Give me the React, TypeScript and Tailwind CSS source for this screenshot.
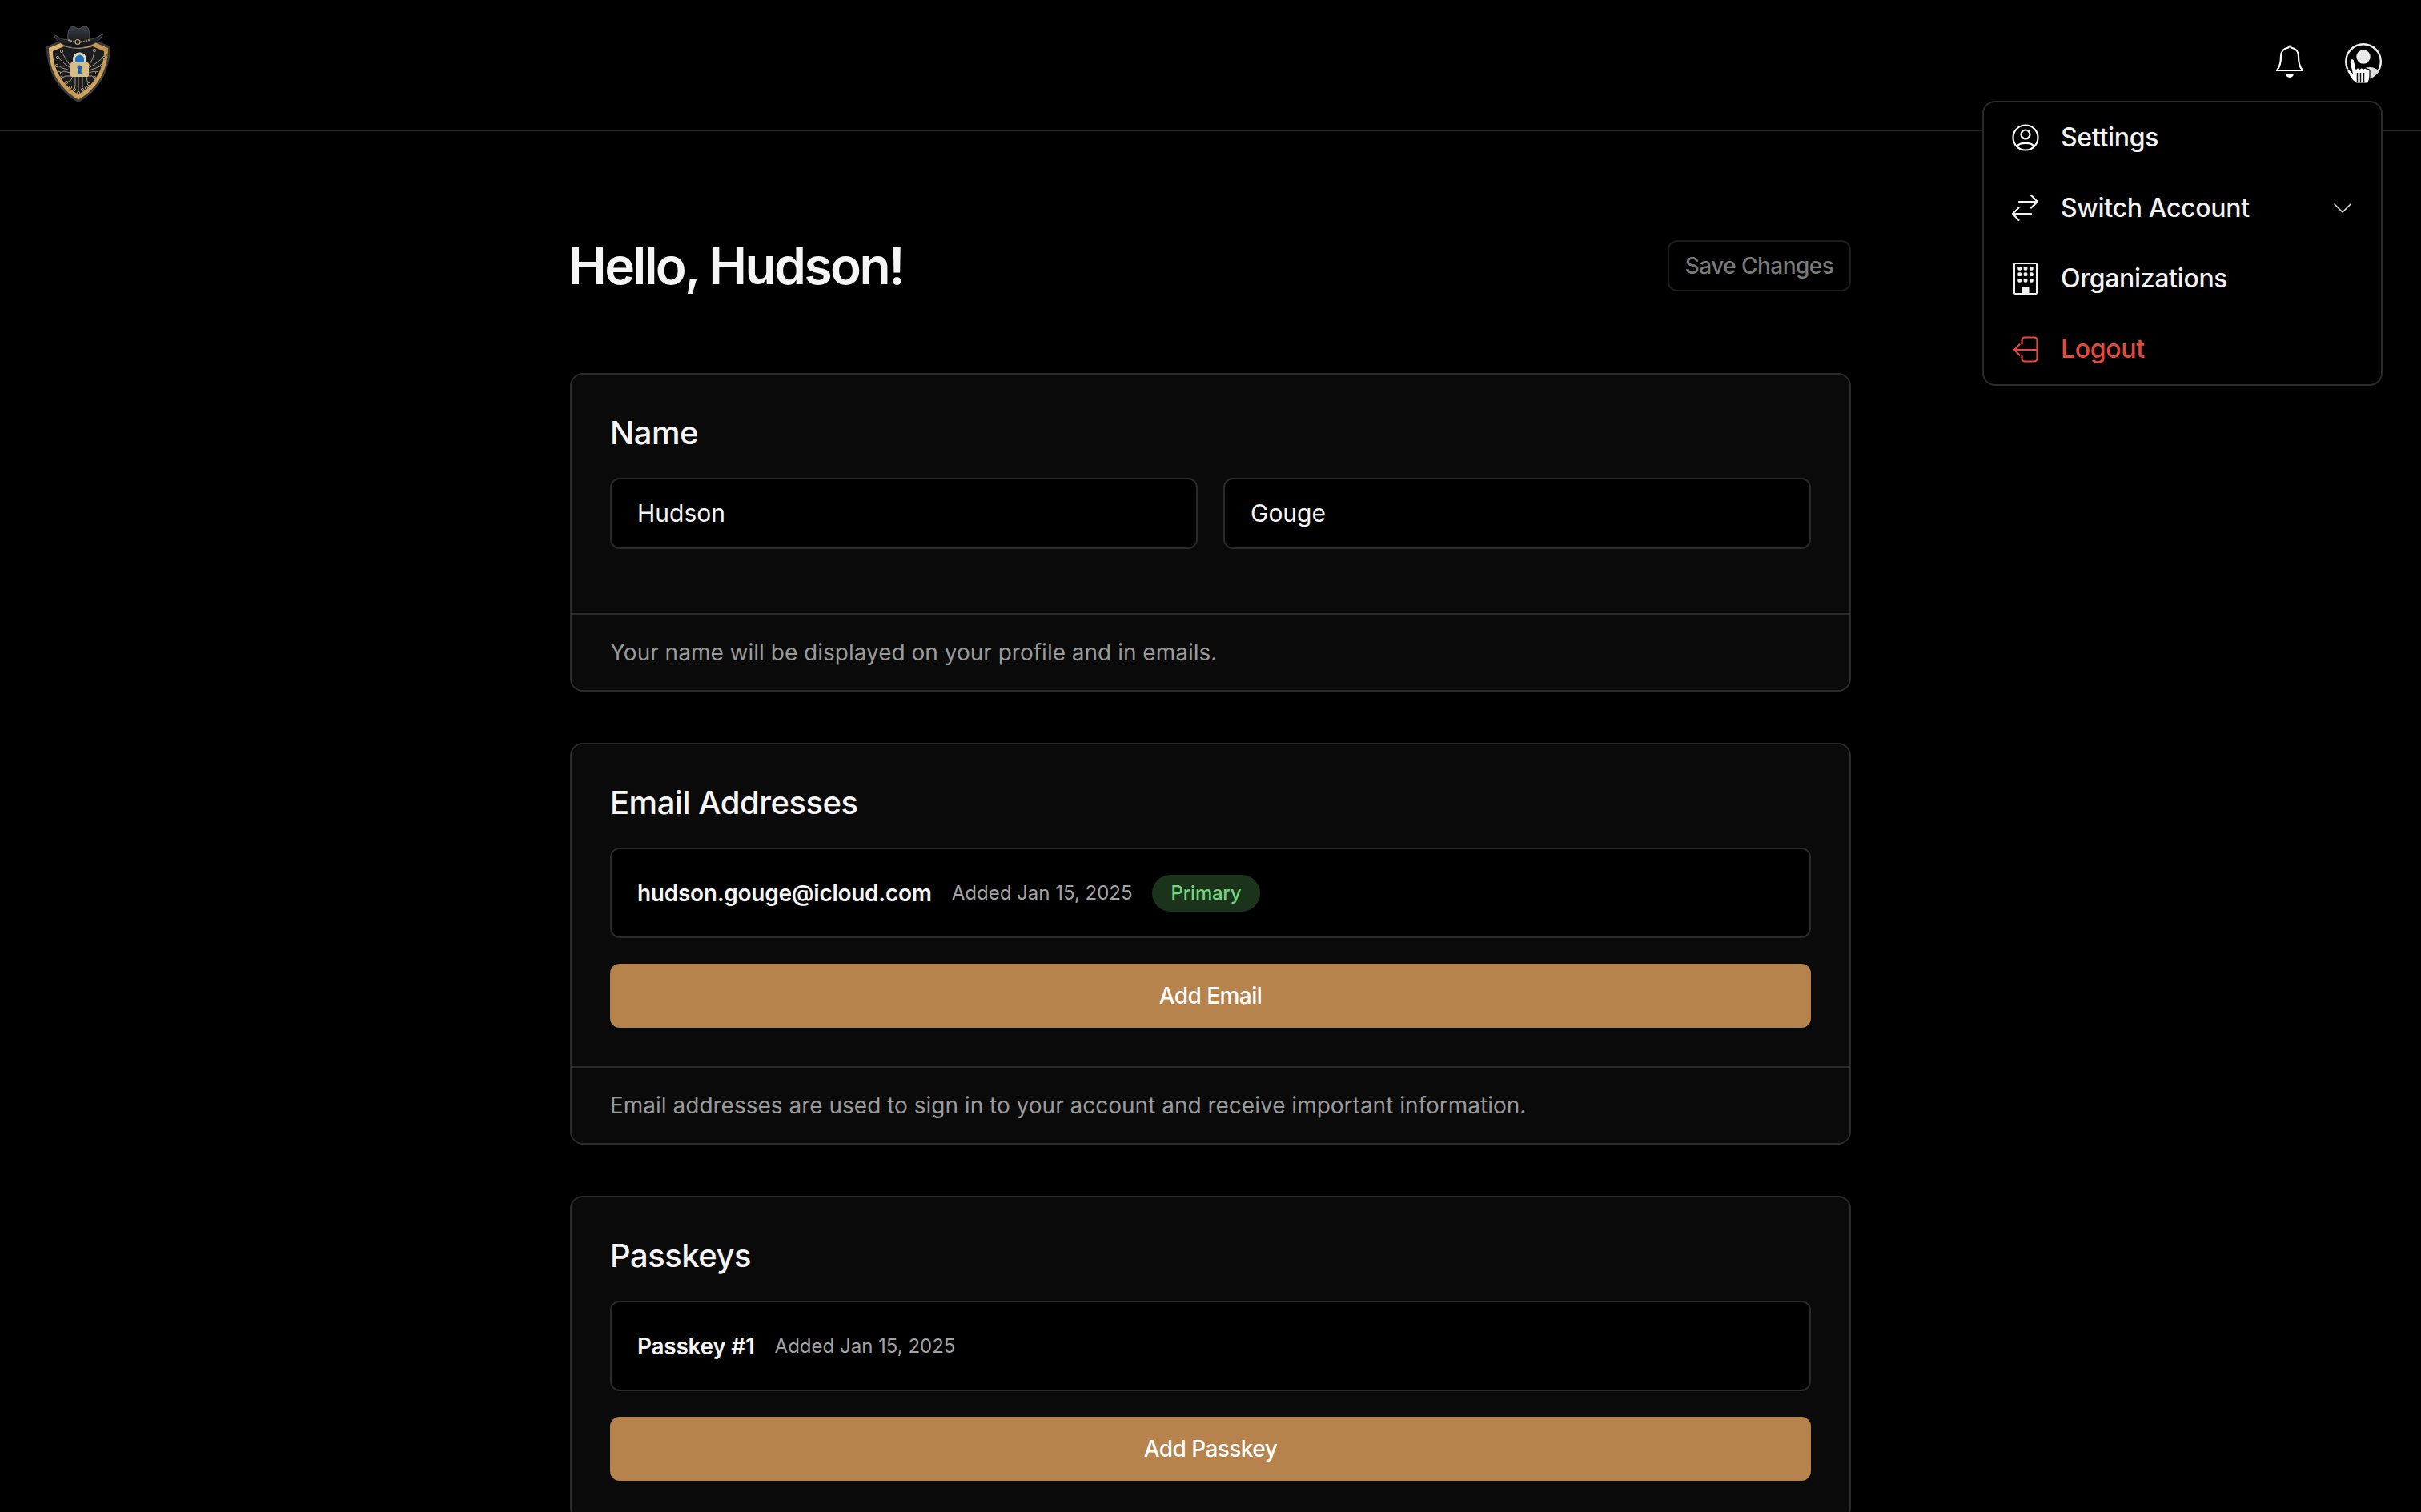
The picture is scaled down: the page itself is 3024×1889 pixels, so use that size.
function Logo() {
  const traces = [
    "M38 57 L33 50 L27 40", "M38 60 L30 54 L23 47", "M38 63 L28 60 L22 57", "M38 66 L30 64 L25 66", "M39 70 L32 70 L28 72",
    "M41 71 L38 76 L33 78", "M61 57 L66 48 L68 39", "M61 60 L70 54 L79 47", "M61 63 L70 60 L77 57", "M61 66 L68 64 L71 66", "M60 70 L65 70 L68 72",
    "M58 71 L59 76 L61 80", "M44 71 L44 82 L43 87", "M48 71 L48 91", "M53 71 L53 87",
  ];
  const pads = [
    [27, 39], [22, 47], [21, 57], [24, 66], [27, 72], [33, 78], [38, 84], [43, 87], [48, 91], [53, 87],
    [58, 85], [61, 80], [68, 72], [71, 66], [77, 57], [80, 47], [68, 38],
  ];
  const rivets = [[12, 44], [14, 60], [84, 44], [82, 60], [20, 74], [76, 74]];
  return (
    <svg viewBox="0 0 100 110" className="mb-0.5 h-[110px] w-[100px]">
      <defs>
        <linearGradient id="gold" x1="0" y1="0" x2="1" y2="1">
          <stop offset="0" stopColor="#e3bd74" />
          <stop offset="0.55" stopColor="#c2944f" />
          <stop offset="1" stopColor="#e0b568" />
        </linearGradient>
        <linearGradient id="hat" x1="0" y1="0" x2="0" y2="1">
          <stop offset="0" stopColor="#3a3d45" />
          <stop offset="1" stopColor="#101014" />
        </linearGradient>
      </defs>
      <path d="M8 33 L28 25 Q48 31 68 25 L88 33 C88 65 72 90 48 103 C24 90 8 65 8 33Z" fill="#3a3b40" />
      <path d="M11 35 L28 28 Q48 34 68 28 L85 35 C85 64 70 87 48 99.500 C26 87 11 64 11 35Z" fill="url(#gold)" />
      <path d="M16 39 L30 33 Q48 39 66 33 L80 39 C80 62 67 82 48 93 C29 82 16 62 16 39Z" fill="#1b1c20" />
      {rivets.map(([cx, cy]) => (
        <circle key={`${cx}-${cy}`} cx={cx} cy={cy} r="0.900" fill="#5a4a2c" />
      ))}
      {traces.map((d) => (
        <path key={d} d={d} fill="none" stroke="#a3957a" strokeWidth="1" />
      ))}
      {pads.map(([cx, cy]) => (
        <circle key={`${cx}-${cy}`} cx={cx} cy={cy} r="1.700" fill="#1b1c20" stroke="#b8a67c" strokeWidth="0.900" />
      ))}
      <path d="M42.500 54 V49 a7 7 0 0 1 14 0 V54" fill="#1d6fc0" stroke="#e8dcb8" strokeWidth="3" />
      <rect x="38" y="53" width="23" height="18" rx="2" fill="#d8bd84" />
      <path d="M49.500 56.500 a3 3 0 0 1 1.800 5.400 L52 68 H47 L47.700 61.900 A3 3 0 0 1 49.500 56.500Z" fill="#1b5fa8" />
      <path d="M17 18 C24 22 30 26 35 24 C34 16 36 9 40 8 C44 8 46 11 48 11 C51 11 54 7 58 8 C62 10 62 18 62 24 C68 24 74 20 79 17 C76 25 68 33 48 35 C30 35 20 27 17 18Z" fill="url(#hat)" stroke="#5a5d66" strokeWidth="0.800" />
      <path d="M35 25 Q48 30 62 25" fill="none" stroke="#a8946c" strokeWidth="2" strokeDasharray="2 1.200" />
      <circle cx="47" cy="27.500" r="3" fill="#201e1a" stroke="#bda578" strokeWidth="1.200" />
    </svg>
  );
}

function BellIcon() {
  return (
    <svg viewBox="13 11 34 42" fill="none" stroke="white" strokeWidth="2.200" strokeLinejoin="round" className="h-[42px] w-[34px]">
      <path d="M30 12.500 c1 0 1.500 1 1.500 2 c6 1 9.500 5 9.500 11 c0 7 1 13 5 17.500 H14 c4-4.500 5-10.500 5-17.500 c0-6 3.500-10 9.500-11 c0-1 .5-2 1.500-2Z" />
      <path d="M25 47 h10 a5 5 0 0 1-10 0Z" fill="white" stroke="none" />
    </svg>
  );
}

function AvatarIcon() {
  return (
    <svg viewBox="98 8 48 48" className="h-12 w-12 overflow-visible">
      <circle cx="122" cy="32" r="21.800" fill="black" stroke="#f0f0f0" strokeWidth="2.400" />
      <circle cx="122" cy="26" r="8.700" fill="#e8e8e8" />
      <path d="M124 40 C133 37 139 41 141.500 44 C137 49 130 53 124 53.500Z" fill="#dddddd" />
      <path
        d="M105.500 30 c1.500-2 4.500-1.500 5 .5 l2.500 11 c.5-2 4-2 4.500 0 c.5-2 4-2 4.500 0 c.5-2 4-2 4.500 .5 c1-1 3.500-.5 3.500 1.500 v7 c0 3-1 6-3 8.500 h-14 c-3-2-6-5-7.500-8 l-3.500-6.500 c-1-2 1-3.500 3-2 l3 3 L105 33Z"
        fill="white"
        stroke="black"
        strokeWidth="1.200"
      />
      <path d="M114.500 46 v11 M118.500 46 v11 M122.500 46 v11" stroke="#111111" strokeWidth="1.500" />
    </svg>
  );
}

function SettingsIcon() {
  return (
    <svg viewBox="0 0 34 34" fill="none" stroke="white" strokeWidth="2.200" className="h-[34px] w-[34px]">
      <circle cx="17" cy="17" r="15.500" />
      <circle cx="17" cy="13" r="5.500" />
      <path d="M6.500 28 C9 22.500 25 22.500 27.500 28" />
    </svg>
  );
}

function SwitchIcon() {
  return (
    <svg viewBox="12 11 36 36" fill="none" stroke="#f2f2f2" strokeWidth="2.200" strokeLinecap="round" strokeLinejoin="round" className="h-9 w-9">
      <path d="M22 21 H45 M37 13 L45 21 L37 28.500" />
      <path d="M37 36 H14 M21.500 28.500 L14 36 L21.500 44" />
    </svg>
  );
}

function BuildingIcon() {
  const cols = [7.700, 15, 22.300];
  const rows = [7.300, 14.700, 22.300];
  return (
    <svg viewBox="0 0 30 40" className="h-10 w-[30px]">
      <rect x="1" y="1" width="28" height="38" rx="1" fill="none" stroke="#f2f2f2" strokeWidth="2" />
      {rows.map((cy) =>
        cols.map((cx) => <rect key={`${cx}-${cy}`} x={cx - 2.400} y={cy - 2.400} width="4.800" height="4.800" rx="1.600" fill="#f2f2f2" />),
      )}
      <rect x="10.500" y="30" width="9" height="10" fill="#f2f2f2" />
    </svg>
  );
}

function LogoutIcon() {
  return (
    <svg viewBox="12 98 32 33" fill="none" stroke="#e5483c" strokeWidth="2.200" strokeLinecap="round" strokeLinejoin="round" className="h-[33px] w-8">
      <path d="M23.500 108 V103 a3.500 3.500 0 0 1 3.500-3.500 h12 a3.500 3.500 0 0 1 3.500 3.500 v23 a3.500 3.500 0 0 1-3.500 3.500 h-12 a3.500 3.500 0 0 1-3.500-3.500 v-4" />
      <path d="M14 115 H42.500 M20.500 108.500 L14 115 L20.500 121.500" />
    </svg>
  );
}

function ChevronIcon() {
  return (
    <svg viewBox="0 0 22 12" fill="none" stroke="#dddddd" strokeWidth="1.600" strokeLinecap="round" strokeLinejoin="round" className="mr-1 h-3 w-[22px]">
      <path d="M1 1 L11 11 L21 1" />
    </svg>
  );
}

function MenuItem({ icon, label, red, chevron }: { icon: React.ReactNode; label: string; red?: boolean; chevron?: boolean }) {
  return (
    <div className={`flex h-[88px] items-center pr-[33px] pl-[34px] ${red ? "text-[#e5483c]" : "text-[#f2f2f2]"}`}>
      <span className="flex w-[36px] justify-center">{icon}</span>
      <span className="ml-[26px] flex-1 text-[32px] font-medium tracking-[-0.01em]">{label}</span>
      {chevron && <ChevronIcon />}
    </div>
  );
}

function Card({ title, footer, children }: { title: string; footer?: string; children: React.ReactNode }) {
  return (
    <section className="rounded-2xl border-2 border-[#2a2a2a] bg-[#0a0a0a]">
      <div className="p-12">
        <h2 className="mb-8 text-[40px] leading-[49px] font-medium tracking-[-0.0125em] text-[#f5f5f5]">{title}</h2>
        {children}
      </div>
      {footer && (
        <div className="flex h-[96px] items-center border-t-2 border-[#2a2a2a] px-12 text-[28px] text-[#9a9a9a]">{footer}</div>
      )}
    </section>
  );
}

function AddButton({ label }: { label: string }) {
  return (
    <button type="button" className="mt-8 block h-[80px] w-full rounded-xl bg-[#b5834b] text-[28px] font-medium tracking-[-0.02em] text-white">
      {label}
    </button>
  );
}

function Row({ name, children }: { name: string; children?: React.ReactNode }) {
  return (
    <div className="flex h-[113px] items-center rounded-xl border-2 border-[#2a2a2a] bg-black px-8">
      <span className="text-[28px] font-semibold tracking-[-0.01em] text-[#f5f5f5]">{name}</span>
      <span className="ml-[25px] text-[24px] text-[#a3a3a3]">Added Jan 15, 2025</span>
      {children}
    </div>
  );
}

export default function App() {
  return (
    <div className="relative h-[1889px] overflow-hidden bg-black text-white [font-family:Inter,'Noto_Sans',sans-serif]">
      <header className="flex h-[164px] items-center justify-between border-b-2 border-[#2a2a2a] pr-[48px] pl-[50px]">
        <Logo />
        <div className="flex items-center gap-[51px] pb-2">
          <BellIcon />
          <AvatarIcon />
        </div>
      </header>

      <div className="absolute top-[126px] right-[48px] w-[500px] rounded-2xl border-2 border-[#2a2a2a] bg-black">
        <MenuItem icon={<SettingsIcon />} label="Settings" />
        <MenuItem icon={<SwitchIcon />} label="Switch Account" chevron />
        <MenuItem icon={<BuildingIcon />} label="Organizations" />
        <MenuItem icon={<LogoutIcon />} label="Logout" red />
      </div>

      <main className="mx-auto w-[1600px] pt-[136px]">
        <div className="mb-[102px] flex h-16 items-center justify-between">
          <h1 className="-ml-0.5 text-[64px] font-semibold tracking-[-0.04em] text-[#f5f5f5]">Hello, Hudson!</h1>
          <button type="button" className="h-16 w-[229px] rounded-xl border-2 border-[#1c1c1c] text-[28px] font-medium tracking-[-0.02em] text-[#7a7a7a]">
            Save Changes
          </button>
        </div>

        <div className="flex flex-col gap-16">
          <Card title="Name" footer="Your name will be displayed on your profile and in emails.">
            <div className="grid grid-cols-2 gap-8 pb-8">
              {["Hudson", "Gouge"].map((value) => (
                <div key={value} className="flex h-[89px] items-center rounded-xl border-2 border-[#2a2a2a] bg-black px-8 text-[30px] text-[#f5f5f5]">
                  {value}
                </div>
              ))}
            </div>
          </Card>

          <Card title="Email Addresses" footer="Email addresses are used to sign in to your account and receive important information.">
            <Row name="hudson.gouge@icloud.com">
              <span className="ml-6 flex h-[46px] items-center rounded-full bg-[#1a331a] px-6 text-[24px] font-medium tracking-[-0.01em] text-[#74d680]">Primary</span>
            </Row>
            <AddButton label="Add Email" />
          </Card>

          <Card title="Passkeys">
            <Row name="Passkey #1" />
            <AddButton label="Add Passkey" />
          </Card>
        </div>
      </main>
    </div>
  );
}
